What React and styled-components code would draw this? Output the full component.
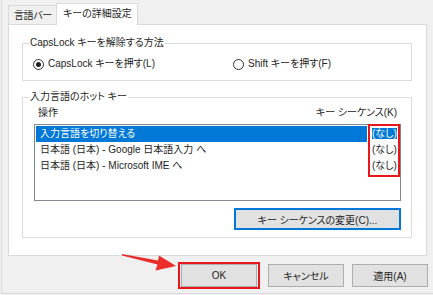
import React from "react";
import styled, { createGlobalStyle } from "styled-components";

const GlobalStyle = createGlobalStyle`
  html, body { margin: 0; padding: 0; background: #f0f0f0; }
  body {
    font-family: "Liberation Sans", "Noto Sans CJK JP", sans-serif;
    font-size: 10px;
    color: #1e1e1e;
    font-feature-settings: "palt";
  }
`;

const Root = styled.div`
  position: relative;
  width: 433px;
  height: 295px;
  overflow: hidden;
  background: #f0f0f0;
`;

const Dialog = styled.div`
  margin-left: 1px;
  width: 432px;
  height: 294px;
  box-sizing: border-box;
  border-left: 1px solid #dadada;
  border-bottom: 1px solid #dadada;
  padding: 3px 6px 0 6px;
  display: flex;
  flex-direction: column;
`;

const TabStrip = styled.div`
  display: flex;
  align-items: flex-end;
  height: 21px;
`;

const Tab = styled.div`
  position: relative;
  z-index: ${(p) => (p.$active ? 2 : 1)};
  box-sizing: border-box;
  width: ${(p) => (p.$active ? 82 : 49)}px;
  height: ${(p) => (p.$active ? 22 : 19)}px;
  margin-left: ${(p) => (p.$active ? -1 : 0)}px;
  margin-bottom: ${(p) => (p.$active ? -1 : 0)}px;
  border: 1px solid #d9d9d9;
  border-bottom: none;
  background: ${(p) => (p.$active ? "#fff" : "#f0f0f0")};
  padding: 2px ${(p) => (p.$active ? 6 : 5)}px 0;
  line-height: 16px;
  letter-spacing: ${(p) => (p.$active ? 0 : -0.4)}px;
  white-space: nowrap;
`;

const Panel = styled.div`
  box-sizing: border-box;
  height: 232px;
  background: #fff;
  border: 1px solid #d9d9d9;
  padding: 10px 14px 0 13px;
  display: flex;
  flex-direction: column;
`;

const Group = styled.fieldset`
  margin: ${(p) => p.$mt || 0}px 0 0;
  padding: 0;
  border: 1px solid #dcdcdc;
  min-width: 0;
`;

const Legend = styled.legend`
  margin-left: 6px;
  padding: 0 1px;
  line-height: 16px;
`;

const RadioRow = styled.div`
  display: grid;
  grid-template-columns: 200px 1fr;
  padding: 5px 0 8px 10px;
  line-height: 16px;
`;

const RadioLabel = styled.label`
  display: flex;
  align-items: center;
  gap: 4px;
  white-space: nowrap;
`;

const RadioDot = styled.span`
  box-sizing: border-box;
  width: 11px;
  height: 11px;
  border: 1px solid #333;
  border-radius: 50%;
  display: grid;
  place-items: center;
  &::after {
    content: "";
    width: 5px;
    height: 5px;
    border-radius: 50%;
    background: ${(p) => (p.$checked ? "#222" : "transparent")};
  }
`;

const HotkeyBody = styled.div`
  padding: 0 10px 7px 11px;
  display: flex;
  flex-direction: column;
`;

const HeaderRow = styled.div`
  display: flex;
  justify-content: space-between;
  padding: 0 4px 0 4px;
  line-height: 16px;
  margin-bottom: 3px;
`;

const ListBox = styled.div`
  position: relative;
  box-sizing: border-box;
  height: 77px;
  border: 1px solid #828790;
  background: #fff;
  padding: 1px;
`;

const Row = styled.div`
  display: grid;
  grid-template-columns: 331px 31px;
  height: 16px;
  line-height: 16px;
`;

const NameCell = styled.div`
  padding-left: 4px;
  white-space: nowrap;
  overflow: hidden;
  background: ${(p) => (p.$selected ? "#0078d7" : "transparent")};
  color: ${(p) => (p.$selected ? "#fff" : "inherit")};
`;

const SeqCell = styled.div`
  padding-left: 5px;
  white-space: nowrap;
`;

const SeqText = styled.span`
  background: ${(p) => (p.$selected ? "#0078d7" : "transparent")};
  color: ${(p) => (p.$selected ? "#fff" : "inherit")};
`;

const RedBox = styled.div`
  position: absolute;
  left: 333px;
  top: -1px;
  width: 32px;
  height: 53px;
  box-sizing: border-box;
  border: 2px solid #e8151b;
  pointer-events: none;
`;

const ActionRow = styled.div`
  display: flex;
  justify-content: flex-end;
  margin-top: 7px;
`;

const Button = styled.button`
  box-sizing: border-box;
  width: ${(p) => p.$w || 76}px;
  height: ${(p) => p.$h || 23}px;
  margin: 0;
  padding: 0;
  border: ${(p) => (p.$focused ? "2px solid #0078d7" : "1px solid #adadad")};
  background: #e1e1e1;
  font: inherit;
  color: #1e1e1e;
  white-space: nowrap;
`;

const Footer = styled.div`
  display: flex;
  justify-content: flex-end;
  align-items: center;
  gap: 8px;
  margin-top: 6px;
  margin-right: -1px;
`;

const Highlight = styled.div`
  display: flex;
  align-items: center;
  height: 27px;
  box-sizing: border-box;
  border: 2px solid #e8151b;
  padding: 0 1px;
`;

const Arrow = styled.svg`
  position: absolute;
  left: 0;
  top: 0;
  width: 433px;
  height: 295px;
  pointer-events: none;
`;

const rows = [
  { name: "入力言語を切り替える", seq: "(なし)", selected: true },
  { name: "日本語 (日本) - Google 日本語入力 へ", seq: "(なし)" },
  { name: "日本語 (日本) - Microsoft IME へ", seq: "(なし)" },
];

export default function App() {
  return (
    <Root>
      <GlobalStyle />
      <Dialog>
        <TabStrip>
          <Tab>言語バー</Tab>
          <Tab $active>キーの詳細設定</Tab>
        </TabStrip>
        <Panel>
          <Group>
            <Legend>CapsLock キーを解除する方法</Legend>
            <RadioRow>
              <RadioLabel>
                <RadioDot $checked />
                CapsLock キーを押す(L)
              </RadioLabel>
              <RadioLabel>
                <RadioDot />
                Shift キーを押す(F)
              </RadioLabel>
            </RadioRow>
          </Group>
          <Group $mt={8}>
            <Legend>入力言語のホット キー</Legend>
            <HotkeyBody>
              <HeaderRow>
                <span>操作</span>
                <span>キー シーケンス(K)</span>
              </HeaderRow>
              <ListBox>
                {rows.map((r) => (
                  <Row key={r.name}>
                    <NameCell $selected={r.selected}>{r.name}</NameCell>
                    <SeqCell>
                      <SeqText $selected={r.selected}>{r.seq}</SeqText>
                    </SeqCell>
                  </Row>
                ))}
                <RedBox />
              </ListBox>
              <ActionRow>
                <Button $w={167} $h={22} $focused>
                  キー シーケンスの変更(C)...
                </Button>
              </ActionRow>
            </HotkeyBody>
          </Group>
        </Panel>
        <Footer>
          <Highlight>
            <Button>OK</Button>
          </Highlight>
          <Button>キャンセル</Button>
          <Button>適用(A)</Button>
        </Footer>
      </Dialog>
      <Arrow viewBox="0 0 433 295">
        <polygon
          points="122,254 158,260.5 159,255.5 176,266 155.5,270.5 157.5,264.5 122,255.6"
          fill="#ec2b2b"
        />
      </Arrow>
    </Root>
  );
}
